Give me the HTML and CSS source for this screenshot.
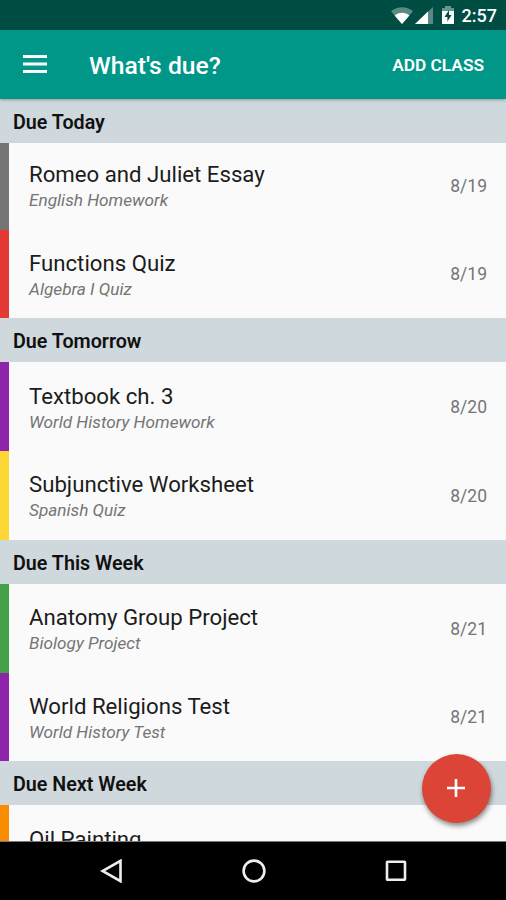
FILE: index.html
```html
<!DOCTYPE html>
<html lang="en">
<head>
    <meta charset="UTF-8">
    <meta name="viewport" content="width=device-width, initial-scale=1.0">
    <title>What's due?</title>
    <link rel="stylesheet" href="styles.css">
</head>
<body>

<div class="status-bar">
    <svg class="wifi" width="22" height="17" viewBox="0 0 22 17">
        <path d="M0 4.2C6.5-1.2 15.5-1.2 22 4.2L11 17z" fill="#fff" opacity="0.35"/>
        <path d="M3.6 8.4C8 4.9 14 4.9 18.4 8.4L11 17z" fill="#fff"/>
    </svg>
    <svg class="signal" width="18" height="17" viewBox="0 0 18 17">
        <path d="M0 17L18 0V17z" fill="#fff" opacity="0.35"/>
        <path d="M0 17L13 4.5V17z" fill="#fff"/>
    </svg>
    <svg class="battery" width="12" height="18" viewBox="0 0 12 18">
        <path d="M0 2H3V0H9V2H12V6H0z" fill="#fff" opacity="0.4"/>
        <path d="M0 5H12V18H0z" fill="#fff"/>
        <path d="M7 4L2.5 11H5.4V15.5L9.6 9H7z" fill="#004d43"/>
    </svg>
    <span class="clock">2:57</span>
</div>

<header class="app-bar">
    <svg class="menu" width="24" height="18" viewBox="0 0 24 18">
        <path d="M0 1.5H24M0 9H24M0 16.5H24" stroke="#fff" stroke-width="2.8"/>
    </svg>
    <h1>What's due?</h1>
    <span class="add-class">ADD CLASS</span>
</header>

<main class="list">
    <section>
        <h2>Due Today</h2>
        <div class="item scrolled gray">
            <div class="info">
                <h3>Romeo and Juliet Essay</h3>
                <p>English Homework</p>
            </div>
            <span class="date">8/19</span>
        </div>
        <div class="item red">
            <div class="info">
                <h3>Functions Quiz</h3>
                <p>Algebra I Quiz</p>
            </div>
            <span class="date">8/19</span>
        </div>
    </section>
    <section>
        <h2>Due Tomorrow</h2>
        <div class="item purple">
            <div class="info">
                <h3>Textbook ch. 3</h3>
                <p>World History Homework</p>
            </div>
            <span class="date">8/20</span>
        </div>
        <div class="item yellow">
            <div class="info">
                <h3>Subjunctive Worksheet</h3>
                <p>Spanish Quiz</p>
            </div>
            <span class="date">8/20</span>
        </div>
    </section>
    <section>
        <h2>Due This Week</h2>
        <div class="item green">
            <div class="info">
                <h3>Anatomy Group Project</h3>
                <p>Biology Project</p>
            </div>
            <span class="date">8/21</span>
        </div>
        <div class="item purple">
            <div class="info">
                <h3>World Religions Test</h3>
                <p>World History Test</p>
            </div>
            <span class="date">8/21</span>
        </div>
    </section>
    <section>
        <h2>Due Next Week</h2>
        <div class="item orange">
            <div class="info">
                <h3>Oil Painting</h3>
            </div>
        </div>
    </section>
</main>

<button class="fab" aria-label="Add">
    <svg width="18" height="18" viewBox="0 0 18 18">
        <path d="M9 0V18M0 9H18" stroke="#fff" stroke-width="2.6"/>
    </svg>
</button>

<nav class="nav-bar">
    <svg width="24" height="24" viewBox="0 0 24 24">
        <path d="M20.5 1.8V22.2L2.5 12z"/>
    </svg>
    <svg width="24" height="24" viewBox="0 0 24 24">
        <circle cx="12" cy="12" r="10.4"/>
    </svg>
    <svg width="24" height="24" viewBox="0 0 24 24">
        <rect x="3" y="2.7" width="18" height="18" rx="0.5"/>
    </svg>
</nav>

</body>
</html>
```
FILE: styles.css
```css
body {
    font-family: Roboto, sans-serif;
    background-color: #fafafa;
    display: flex;
    flex-direction: column;
    height: 900px;
    margin: 0;
    overflow: hidden;
}
h1, h2, h3, p {
    margin: 0;
}
.status-bar {
    background-color: #004d43;
    color: white;
    height: 30px;
    flex: none;
    display: flex;
    align-items: center;
    justify-content: flex-end;
    padding-right: 9px;
    box-sizing: border-box;
}
.wifi {
    margin-right: 2px;
}
.signal {
    margin-right: 9px;
}
.battery {
    margin-right: 8px;
}
.clock {
    font-size: 18px;
    font-weight: 500;
    line-height: 30px;
    margin-top: 2px;
}
.app-bar {
    background-color: #009788;
    color: white;
    height: 69px;
    flex: none;
    display: flex;
    align-items: center;
    padding: 0 22px 0 23px;
    position: relative;
    z-index: 2;
    box-shadow: 0 1px 3px rgba(0, 0, 0, 0.3);
}
.menu {
    margin-bottom: 2px;
}
.app-bar h1 {
    font-size: 24.7px;
    font-weight: 500;
    margin: 2px 0 0 42px;
    flex: 1;
}
.add-class {
    font-size: 17.3px;
    font-weight: 600;
    margin-top: 1px;
}
.list {
    flex: 1;
    min-height: 0;
    overflow: hidden;
    border-bottom: 1px solid #777;
}
h2 {
    background-color: #cfd8dc;
    color: #111;
    font-size: 19.7px;
    font-weight: 600;
    line-height: 47px;
    height: 44.3px;
    padding-left: 13px;
    position: relative;
    z-index: 1;
}
.item {
    display: flex;
    align-items: center;
    justify-content: space-between;
    height: 88.6px;
    box-sizing: border-box;
    padding: 0 19px 0 20px;
    border-left: 9px solid;
}
/* first row sits partly under its sticky header */
.scrolled {
    margin-top: -2.3px;
}
.gray {
    border-color: #757575;
}
.red {
    border-color: #e53935;
}
.purple {
    border-color: #8e24aa;
}
.yellow {
    border-color: #fdd835;
}
.green {
    border-color: #43a047;
}
.orange {
    border-color: #fb8c00;
}
.info {
    height: 68px;
}
.info h3 {
    color: #1c1c1c;
    font-size: 22.2px;
    font-weight: 400;
    line-height: 28px;
    margin-top: 9px;
}
.info p {
    color: #757575;
    font-size: 17.2px;
    font-style: italic;
    line-height: 25px;
}
.date {
    color: #757575;
    font-size: 17.5px;
    margin-top: 1px;
}
.fab {
    position: absolute;
    z-index: 3;
    left: 421.5px;
    top: 753.5px;
    width: 69px;
    height: 69px;
    border: none;
    border-radius: 50%;
    background-color: #db4437;
    display: flex;
    align-items: center;
    justify-content: center;
    padding: 0;
    box-shadow: 1px 3px 5px rgba(0, 0, 0, 0.45);
}
.nav-bar {
    background-color: black;
    height: 58px;
    flex: none;
    display: flex;
    align-items: center;
    justify-content: center;
    gap: 118px;
    padding-left: 2px;
}
.nav-bar svg {
    fill: none;
    stroke: #eee;
    stroke-width: 2.6;
}
```
